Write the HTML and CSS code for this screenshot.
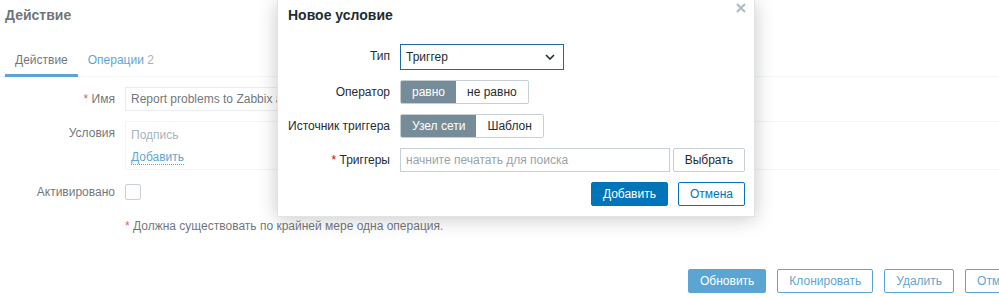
FILE: index.html
```html
<!DOCTYPE html>
<html lang="ru">
<head>
    <meta charset="UTF-8">
    <title>Действие</title>
    <link rel="stylesheet" href="styles.css">
</head>
<body>

    <!-- Action form (behind the dialog) -->
    <div class="page">
        <h1 class="page-title">Действие</h1>

        <ul class="tabs">
            <li class="tab active">Действие</li>
            <li class="tab"><a href="#ops">Операции <span class="count">2</span></a></li>
        </ul>

        <div class="form">
            <div class="form-label"><span class="req">*</span> Имя</div>
            <div class="form-field">
                <input class="text-input name-input" type="text" value="Report problems to Zabbix administrators">
            </div>

            <div class="form-label">Условия</div>
            <div class="form-field">
                <div class="conditions">
                    <div class="conditions-head">Подпись</div>
                    <a class="link-action" href="#add">Добавить</a>
                </div>
            </div>

            <div class="form-label">Активировано</div>
            <div class="form-field">
                <span class="checkbox"></span>
            </div>

            <div class="form-label"></div>
            <div class="note"><span class="req">*</span> Должна существовать по крайней мере одна операция.</div>
        </div>

        <div class="form-actions">
            <button class="btn btn-primary">Обновить</button>
            <button class="btn btn-alt">Клонировать</button>
            <button class="btn btn-alt">Удалить</button>
            <button class="btn btn-alt">Отмена</button>
        </div>
    </div>

    <!-- Dim layer -->
    <div class="overlay"></div>

    <!-- New condition dialog -->
    <div class="dialog">
        <div class="dialog-head">Новое условие</div>
        <button class="dialog-close" aria-label="Закрыть">
            <svg width="10" height="10" viewBox="0 0 10 10">
                <path d="M1 1 L9 9 M9 1 L1 9" stroke="#acbbc2" stroke-width="2" fill="none"/>
            </svg>
        </button>

        <div class="dialog-body">
            <div class="dlg-label">Тип</div>
            <div class="dlg-field">
                <div class="select">
                    <span>Триггер</span>
                    <svg width="10" height="6" viewBox="0 0 10 6">
                        <path d="M1 1 L5 5 L9 1" stroke="#1f2c33" stroke-width="1.6" fill="none"/>
                    </svg>
                </div>
            </div>

            <div class="dlg-label">Оператор</div>
            <div class="dlg-field">
                <div class="radio-group">
                    <span class="radio-item selected">равно</span>
                    <span class="radio-item">не равно</span>
                </div>
            </div>

            <div class="dlg-label">Источник триггера</div>
            <div class="dlg-field">
                <div class="radio-group">
                    <span class="radio-item selected">Узел сети</span>
                    <span class="radio-item">Шаблон</span>
                </div>
            </div>

            <div class="dlg-label"><span class="req">*</span> Триггеры</div>
            <div class="dlg-field multiselect">
                <input class="text-input ms-input" type="text" placeholder="начните печатать для поиска">
                <button class="btn btn-grey">Выбрать</button>
            </div>

            <div class="dlg-footer">
                <button class="btn btn-primary">Добавить</button>
                <button class="btn btn-alt">Отмена</button>
            </div>
        </div>
    </div>

</body>
</html>
```

FILE: styles.css
```css
* {
    margin: 0;
    padding: 0;
    box-sizing: border-box;
}

body {
    font-family: "Liberation Sans", Arial, sans-serif;
    font-size: 12px;
    color: #1f2c33;
    background-color: #fff;
    width: 999px;
    height: 297px;
    overflow: hidden;
    position: relative;
}

a {
    color: #0275b8;
    text-decoration: none;
}

.req {
    color: #d40000;
}

/* Page */
.page {
    width: 999px;
    overflow: hidden;
}

.page-title {
    font-size: 14px;
    font-weight: bold;
    line-height: 18px;
    padding: 6px 5px 0;
}

/* Tabs */
.tabs {
    list-style: none;
    display: flex;
    margin-top: 21px;
    padding-left: 5px;
    border-bottom: 1px solid #ebeef0;
}

.tab {
    padding: 8px 10px 7px;
    line-height: 14px;
    border-bottom: 3px solid transparent;
    margin-bottom: -1px;
}

.tab.active {
    border-bottom-color: #0275b8;
}

.tab .count {
    color: #768d99;
}

/* Form */
.form {
    display: grid;
    grid-template-columns: 115px 1fr;
    column-gap: 10px;
    row-gap: 10px;
    margin-top: 10px;
}

.form-label {
    text-align: right;
    line-height: 24px;
    white-space: nowrap;
}

.form-field {
    min-height: 24px;
    display: flex;
    align-items: center;
}

.text-input {
    height: 24px;
    border: 1px solid #dfe4e7;
    padding: 0 5px;
    font-family: inherit;
    font-size: 12px;
    color: #1f2c33;
    background: #fff;
    outline: none;
}

.text-input::placeholder {
    color: #9aa4a9;
}

.name-input {
    width: 453px;
}

.conditions {
    width: 100%;
    border: 1px solid #ebeef0;
    border-right: none;
    padding: 6px 5px 4px;
    line-height: 14px;
}

.conditions-head {
    color: #768d99;
    margin-bottom: 8px;
}

.link-action {
    display: inline-block;
    border-bottom: 1px dotted #0275b8;
}

.checkbox {
    width: 16px;
    height: 16px;
    border: 1px solid #acbbc2;
    border-radius: 2px;
    background: #fff;
}

.note {
    line-height: 24px;
}

/* Buttons */
.btn {
    height: 24px;
    padding: 0 11px;
    border: 1px solid #0275b8;
    border-radius: 2px;
    font-family: inherit;
    font-size: 12px;
    line-height: 22px;
    white-space: nowrap;
    flex-shrink: 0;
    cursor: pointer;
}

.btn-primary {
    background-color: #0275b8;
    color: #fff;
}

.btn-alt {
    background-color: #fff;
    color: #0275b8;
}

.btn-grey {
    background-color: #fff;
    border-color: #c5cfd4;
    color: #1f2c33;
}

.form-actions {
    display: flex;
    gap: 11px;
    margin-top: 31px;
    padding-left: 688px;
}

/* Dim layer */
.overlay {
    position: absolute;
    top: 0;
    left: 0;
    width: 100%;
    height: 100%;
    background: rgba(255, 255, 255, 0.35);
}

/* Dialog */
.dialog {
    position: absolute;
    top: 0;
    left: 277px;
    width: 478px;
    background: #fff;
    border: 1px solid #dfe4e7;
    border-top: none;
    box-shadow: 0 2px 18px rgba(0, 0, 0, 0.22);
}

.dialog-head {
    height: 30px;
    line-height: 30px;
    padding-left: 10px;
    font-size: 14px;
    font-weight: bold;
}

.dialog-close {
    position: absolute;
    top: 2px;
    right: 7px;
    width: 12px;
    height: 12px;
    border: none;
    background: none;
    display: flex;
    align-items: center;
    justify-content: center;
}

.dialog-body {
    display: grid;
    grid-template-columns: 102px 1fr;
    column-gap: 10px;
    row-gap: 10px;
    padding: 14px 9px 10px 10px;
}

.dlg-label {
    text-align: right;
    line-height: 24px;
    white-space: nowrap;
}

.dlg-field {
    display: flex;
    align-items: center;
}

.select {
    width: 164px;
    height: 26px;
    border: 1px solid #1b6aa5;
    display: flex;
    align-items: center;
    justify-content: space-between;
    padding: 0 8px 0 5px;
}

.radio-group {
    display: flex;
    border: 1px solid #c5cfd4;
    border-radius: 2px;
    overflow: hidden;
}

.radio-item {
    padding: 0 11px;
    line-height: 22px;
    background: #fff;
}

.radio-item.selected {
    background: #768d99;
    color: #fff;
}

.multiselect {
    gap: 3px;
}

.ms-input {
    flex: 1;
    border-color: #c5cfd4;
}

.dlg-footer {
    grid-column: 1 / -1;
    display: flex;
    justify-content: flex-end;
    gap: 10px;
}
```
